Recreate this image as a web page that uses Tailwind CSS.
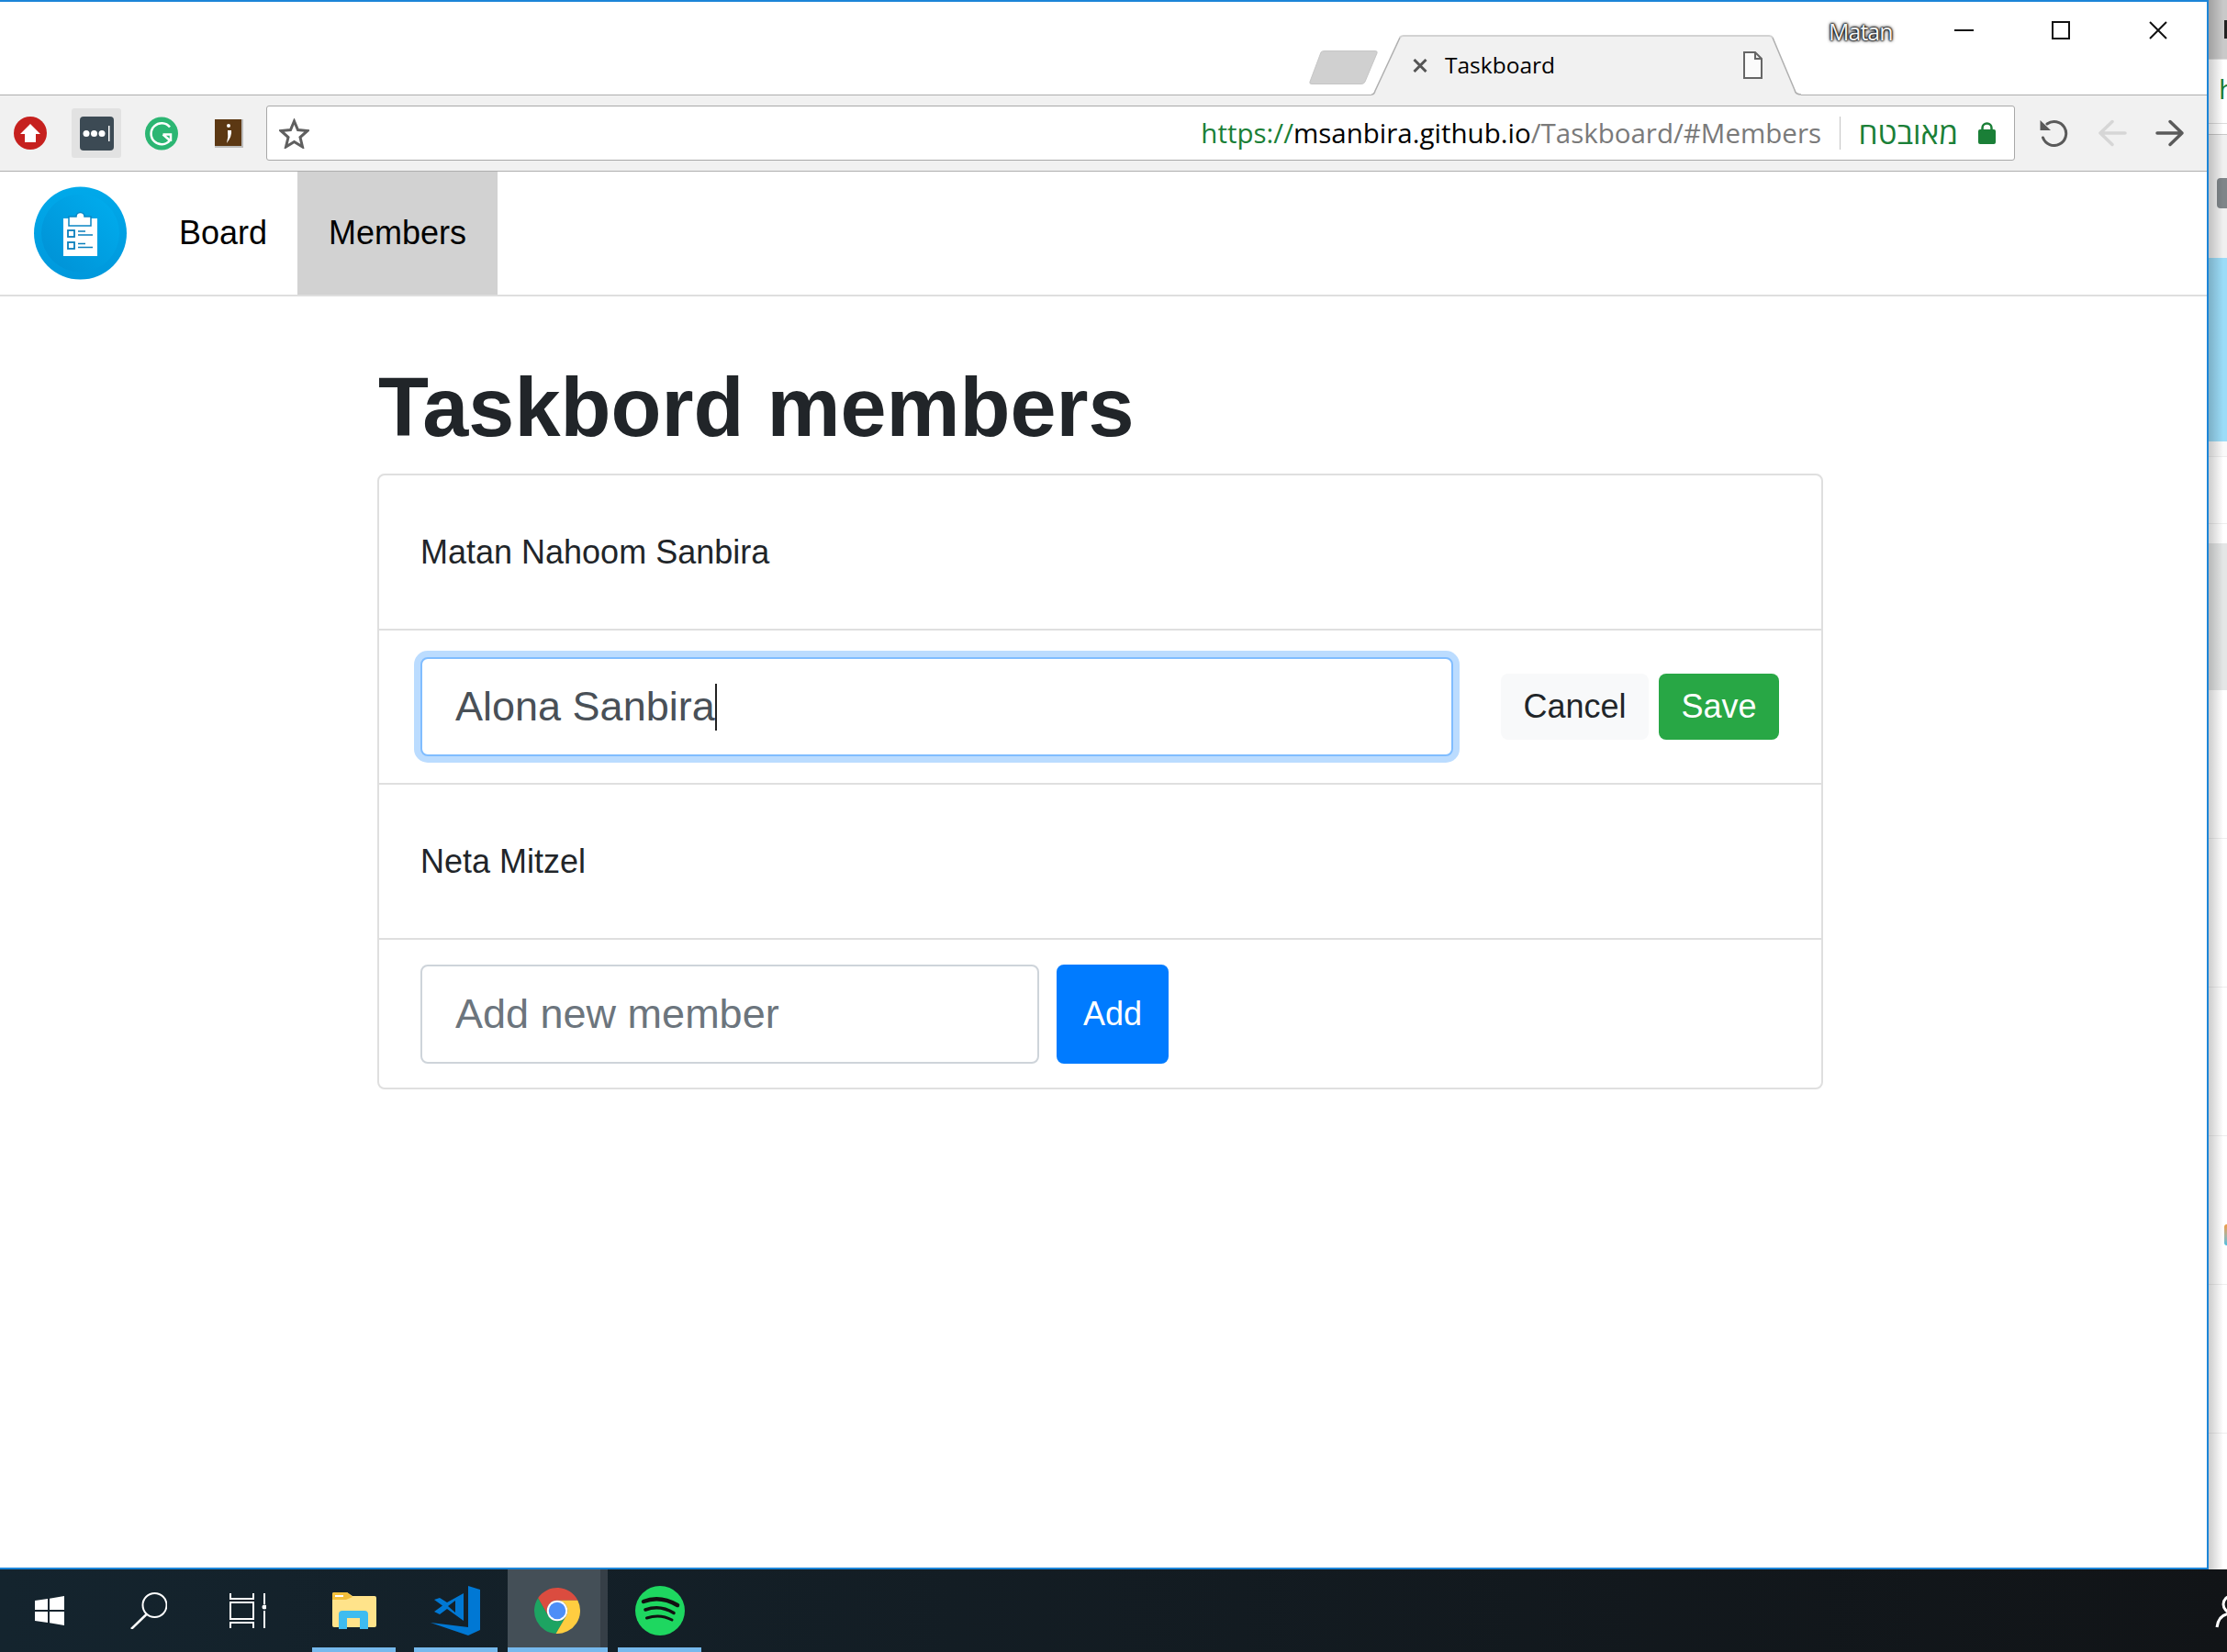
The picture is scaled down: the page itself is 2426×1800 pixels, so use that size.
<!DOCTYPE html>
<html lang="en">
<head>
<meta charset="utf-8">
<title>Taskboard</title>
<script src="https://cdn.jsdelivr.net/npm/@tailwindcss/browser@4"></script>
</head>
<body class="bg-white font-['Liberation_Sans',sans-serif] text-[#212529]">
<div class="flex h-[1800px] w-[2426px] flex-col overflow-hidden">
  <div class="flex h-[1710px]">
    <!-- browser window -->
    <div class="flex w-[2406px] flex-col border-y-2 border-r-2 border-[#1c85d8] bg-white">
      <!-- title bar -->
      <div class="flex h-[102px] items-end border-b border-[#aeaeae]">
        <svg class="mb-[11px] ml-[1426px] -mr-[7px] h-[37px] w-[75px]" viewBox="0 0 75 37"><path d="M13 2 Q14 0.500 17 0.500 H72 Q75 0.500 74 3 L61 34 Q60 36.500 57 36.500 H3 Q0 36.500 1 34 Z" fill="#d0d0d0" stroke="#c6c6c6"/></svg>
        <div class="relative -mb-px flex h-[66px] w-[468px] items-center">
          <svg class="absolute inset-0 h-full w-full" viewBox="0 0 468 66"><path d="M0 65 Q3 65 4 61 L30 3 Q31 1 34 1 H434 Q437 1 438 3 L461 60 Q462 65 468 65 V66 H0 Z" fill="#f1f1f1"/><path d="M0 65 Q3 65 4 61 L31 3" fill="none" stroke="#b0b0b0" stroke-width="1.500"/><path d="M31 3 Q32 1 35 1 H433 Q436 1 437 3" fill="none" stroke="#d2d2d2" stroke-width="2"/><path d="M437 3 L461 60 Q462 65 468 65" fill="none" stroke="#b0b0b0" stroke-width="1.500"/></svg>
          <svg class="relative ml-[45px] h-[15px] w-[16px]" viewBox="0 0 16 15"><path d="M1.500 1 L14.500 14 M14.500 1 L1.500 14" stroke="#555" stroke-width="3" fill="none"/></svg>
          <span class="relative ml-[19px] w-[118px] font-['Open_Sans',sans-serif] text-[24.500px] whitespace-nowrap text-black">Taskboard</span>
          <svg class="relative ml-[207px] h-[30px] w-[21px]" viewBox="0 0 21 30"><path d="M1 1 H13 L20 8 V29 H1 Z M13 1 V8 H20" fill="#fbfbfb" stroke="#666" stroke-width="2"/></svg>
        </div>
        <span class="mb-[56px] ml-[30px] w-[72px] font-['Open_Sans',sans-serif] text-[25px] leading-[26px] tracking-[-1px] text-[#f4f4f4] [text-shadow:0_0_2px_#000,0_0_2px_#000,0_0_3px_#000,0_0_4px_#222]">Matan</span>
        <svg class="mb-[60px] ml-[65px] h-[20px] w-[21px]" viewBox="0 0 21 20"><path d="M0 10 H21" stroke="#111" stroke-width="2"/></svg>
        <svg class="mb-[60px] ml-[85px] h-[20px] w-[20px]" viewBox="0 0 20 20"><rect x="1" y="1" width="18" height="18" fill="none" stroke="#111" stroke-width="2"/></svg>
        <svg class="mb-[60px] ml-[86px] h-[20px] w-[20px]" viewBox="0 0 20 20"><path d="M1 1 L19 19 M19 1 L1 19" stroke="#111" stroke-width="2"/></svg>
      </div>
      <!-- toolbar -->
      <div class="flex h-[83px] items-center border-b border-[#aeaeae] bg-[#f1f1f1]">
        <svg class="ml-[15px] h-[36px] w-[36px]" viewBox="0 0 36 36"><circle cx="18" cy="18" r="18" fill="#c6201e"/><path d="M18 8 L29 19 H24 V28 H12 V19 H7 Z" fill="#fff"/></svg>
        <div class="ml-[27px] flex h-[54px] w-[54px] items-center justify-center rounded-[3px] bg-[#e2e2e2]">
          <svg class="h-[37px] w-[37px]" viewBox="0 0 37 37"><rect width="37" height="37" rx="4" fill="#3c4a54"/><circle cx="7" cy="18.500" r="3.500" fill="#fff"/><circle cx="15.500" cy="18.500" r="3.500" fill="#fff"/><circle cx="24" cy="18.500" r="3.500" fill="#fff"/><rect x="31" y="10" width="1.500" height="17" fill="#fff"/></svg>
        </div>
        <svg class="ml-[26px] h-[37px] w-[36px]" viewBox="0 0 36 37"><circle cx="18" cy="18.500" r="18" fill="#2cb673"/><path d="M27 11.500 A11.500 11.500 0 1 0 27 26 L19.500 19.500 M19.500 19.500 H28 V27" fill="none" stroke="#fff" stroke-width="2.500"/></svg>
        <svg class="ml-[40px] h-[31px] w-[31px]" viewBox="0 0 31 31"><rect width="31" height="31" fill="#bdbdbd"/><rect width="29" height="29" fill="#5c3813"/><circle cx="15" cy="7" r="2" fill="#fff"/><path d="M14 12 H18 Q19 18 13 26 Q15 19 14 12 Z" fill="#fff"/></svg>
        <!-- address bar -->
        <div class="ml-[25px] flex h-[60px] w-[1905px] items-center rounded-[3px] border border-[#a8a8a8] bg-white pr-[20px]">
          <svg class="ml-[13px] h-[33px] w-[33px]" viewBox="0 0 33 33"><path d="M16.500 3 L20.500 12.500 L31 13.500 L23 20.500 L25.500 31 L16.500 25.500 L7.500 31 L10 20.500 L2 13.500 L12.500 12.500 Z" fill="none" stroke="#5f5f5f" stroke-width="3" stroke-linejoin="miter"/></svg>
          <div class="ml-auto font-['Open_Sans',sans-serif] text-[29.500px] leading-none whitespace-nowrap"><span class="text-[#1a7f37]">https://</span><span class="text-black">msanbira.github.io</span><span class="text-[#7a7a7a]">/Taskboard/#Members</span></div>
          <div class="mx-[20px] h-[36px] w-px bg-[#c4c4c4]"></div>
          <span dir="rtl" lang="he" class="w-[108px] font-['Open_Sans','Liberation_Sans',sans-serif] text-[33.500px] leading-none whitespace-nowrap text-[#1a7f37]">מאובטח</span>
          <svg class="ml-[22px] h-[24px] w-[19px]" viewBox="0 0 19 24"><path d="M4.500 10 V6.500 A5 5 0 0 1 14.500 6.500 V10" fill="none" stroke="#1a7f37" stroke-width="2.500"/><rect y="8" width="19" height="16" rx="2" fill="#1a7f37"/></svg>
        </div>
        <svg class="ml-[27px] h-[30px] w-[32px]" viewBox="0 0 32 30"><path d="M8 5 A13 13 0 1 1 3.500 20" fill="none" stroke="#5a5a5a" stroke-width="3" stroke-linecap="round"/><path d="M0.500 1 V12 H12 Z" fill="#5a5a5a"/></svg>
        <svg class="ml-[31px] h-[30px] w-[32px]" viewBox="0 0 32 30"><path d="M30 15 H3 M16 2.500 L3 15 L16 27.500" fill="none" stroke="#d6d6d6" stroke-width="3.500" stroke-linecap="round" stroke-linejoin="round"/></svg>
        <svg class="ml-[31px] h-[30px] w-[32px]" viewBox="0 0 32 30"><path d="M2 15 H29 M16 2.500 L29 15 L16 27.500" fill="none" stroke="#5a5a5a" stroke-width="3.500" stroke-linecap="round" stroke-linejoin="round"/></svg>
      </div>
      <!-- app navbar -->
      <nav class="flex h-[136px] items-stretch border-b-2 border-[#dedede]">
        <svg class="my-auto ml-[37px] h-[102px] w-[101px]" viewBox="0 0 101 102">
          <defs>
            <linearGradient id="ring" x1="0" y1="0" x2="0" y2="1"><stop offset="0" stop-color="#00a9ea"/><stop offset="1" stop-color="#0098dc"/></linearGradient>
            <linearGradient id="disc" x1="0" y1="1" x2="1" y2="0"><stop offset="0" stop-color="#0090d4"/><stop offset="1" stop-color="#00aeef"/></linearGradient>
          </defs>
          <circle cx="50.500" cy="51" r="50.500" fill="url(#ring)"/>
          <circle cx="50.500" cy="51" r="42.500" fill="url(#disc)"/>
          <rect x="32" y="35" width="37" height="41" fill="#fff"/>
          <path d="M38 43 V33 H46 A4.500 4.500 0 0 1 55 33 H62 V43 Z" fill="#fff" stroke="#0a86c4" stroke-width="1.500"/>
          <rect x="37" y="48" width="7" height="7" fill="#fff" stroke="#0a7fbd" stroke-width="1.800"/>
          <rect x="37" y="61" width="7" height="7" fill="#fff" stroke="#0a7fbd" stroke-width="1.800"/>
          <path d="M48 49 H56 M48 53 H64 M48 62.500 H56 M48 66.500 H64" stroke="#0a7fbd" stroke-width="1.600"/>
        </svg>
        <a class="ml-[24px] flex w-[162px] items-center pl-[33px] text-[36px] text-black">Board</a>
        <a class="flex w-[218px] items-center justify-center bg-[#d2d2d2] text-[36px] text-black">Members</a>
      </nav>
      <!-- page -->
      <main class="flex-1 pl-[411px]">
        <h1 class="pt-[67px] pb-[18px] pl-px text-[90px] leading-[108px] font-bold">Taskbord members</h1>
        <div class="w-[1575px] rounded-lg border-2 border-[#dfdfdf] bg-white text-[36px]">
          <div class="flex h-[169px] items-center border-b-2 border-[#dfdfdf] pl-[45px]">Matan Nahoom Sanbira</div>
          <div class="flex h-[168px] items-center border-b-2 border-[#dfdfdf] pl-[45px]">
            <div class="flex h-[108px] w-[1125px] items-center rounded-lg border-2 border-[#80bdff] bg-white pl-[36px] text-[45px] text-[#495057] shadow-[0_0_0_7px_#bbdcff]">Alona Sanbira<span class="h-[51px] w-[2px] bg-[#222]"></span></div>
            <button class="ml-[52px] h-[72px] w-[161px] rounded-lg bg-[#f8f9fa] text-[#212529]">Cancel</button>
            <button class="ml-[11px] h-[72px] w-[131px] rounded-lg bg-[#28a745] text-white">Save</button>
          </div>
          <div class="flex h-[169px] items-center border-b-2 border-[#dfdfdf] pl-[45px]">Neta Mitzel</div>
          <div class="flex h-[161px] items-center pl-[45px]">
            <input class="h-[108px] w-[674px] rounded-lg border-2 border-[#ced4da] bg-white pl-[36px] text-[45px] placeholder:text-[#6c757d]" placeholder="Add new member">
            <button class="ml-[19px] h-[108px] w-[122px] rounded-lg bg-[#007bff] text-white">Add</button>
          </div>
        </div>
      </main>
    </div>
    <!-- sliver of the window behind -->
    <aside class="relative w-[20px] overflow-hidden bg-white">
      <div class="flex h-[64px] items-center justify-end overflow-hidden bg-[#c9c9c9]"><div class="h-[20px] w-[3px] bg-[#222]"></div></div>
      <div class="h-[71px] overflow-hidden border-y border-[#dcdcdc] pl-[11px] font-['Open_Sans',sans-serif] text-[30px] leading-[64px] text-[#1a7f37]">h</div>
      <div class="h-[12px] border-b border-[#c8c8c8]"></div>
      <div class="flex h-[134px] justify-end bg-[#f0f0f0] pt-[47px]"><div class="h-[33px] w-[11px] rounded-l-[4px] bg-[#7f8589]"></div></div>
      <div class="h-[200px] bg-[#9bdcf8]"></div>
      <div class="h-[17px] border-b border-[#eeeeee] bg-[#fafafa]"></div>
      <div class="h-[73px] border-b border-[#eeeeee]"></div>
      <div class="h-[21px]"></div>
      <div class="h-[160px] bg-[#e4e6e6]"></div>
      <div class="h-[162px] border-b border-[#eeeeee]"></div>
      <div class="h-[162px] border-b border-[#eeeeee]"></div>
      <div class="h-[162px] border-b border-[#eeeeee]"></div>
      <div class="relative h-[162px] border-b border-[#eeeeee]"><div class="absolute top-[96px] right-0 h-[23px] w-[3px] rounded-l-sm bg-gradient-to-b from-[#ee9a3a] to-[#43bfe0]"></div></div>
      <div class="h-[162px] border-b border-[#eeeeee]"></div>
      <div class="absolute inset-y-0 left-0 w-[16px] bg-gradient-to-r from-black/20 to-transparent"></div>
    </aside>
  </div>
  <!-- windows taskbar -->
  <footer class="flex h-[90px] items-stretch bg-gradient-to-r from-[#14242e] to-[#111417]">
    <svg class="my-auto ml-[38px] h-[32px] w-[32px]" viewBox="0 0 32 32"><path d="M0 5 L14 3 V15 H0 Z M16 2.700 L32 0 V15 H16 Z M0 17 H14 V29 L0 27 Z M16 17 H32 V32 L16 29.300 Z" fill="#fff"/></svg>
    <svg class="my-auto ml-[72px] h-[40px] w-[40px]" viewBox="0 0 40 40"><ellipse cx="26.500" cy="14" rx="13" ry="13" fill="none" stroke="#fff" stroke-width="2"/><path d="M17.500 24 L1 40" stroke="#fff" stroke-width="2.500"/></svg>
    <svg class="my-auto ml-[68px] h-[38px] w-[40px]" viewBox="0 0 40 38"><path d="M1 0 V6 H26 V0 M1 10 H26 V28 H1 Z M1 38 V32 H26 V38 M38 0 V12 M38 19 V38" fill="none" stroke="#fff" stroke-width="2"/><circle cx="38" cy="15" r="2.500" fill="#fff"/></svg>
    <div class="relative ml-[50px] flex w-[91px] items-center justify-center">
      <svg class="h-[40px] w-[48px]" viewBox="0 0 48 40"><path d="M0 2 Q0 0 2 0 H16 L22 4 H46 Q48 4 48 6 V36 Q48 38 46 38 H2 Q0 38 0 36 Z" fill="#ffe38a"/><path d="M0 2 Q0 0 2 0 H16 L22 5 L15 8 H0 Z" fill="#f3bf3b"/><rect x="3" y="3" width="9" height="2" fill="#fff"/><path d="M7 40 V24 Q7 20 11 20 H35 Q39 20 39 24 V40 H30 V28 H16 V40 Z" fill="#3ebcf0"/></svg>
      <div class="absolute inset-x-0 bottom-0 h-[5px] bg-[#76b9ed]"></div>
    </div>
    <div class="relative ml-[20px] flex w-[91px] items-center justify-center">
      <svg class="h-[55px] w-[55px]" viewBox="0 0 55 55"><path d="M41 0 L54 4 V48 L41 54 L0 40 L41 45 Z" fill="#0078d4"/><path fill-rule="evenodd" d="M36 8 V38 L18 25 L10 31 L4 28 L13 21.500 L4 15 L10 13 L18 18 Z M27 16 L19 22 L27 29 Z" fill="#0078d4"/></svg>
      <div class="absolute inset-x-0 bottom-0 h-[5px] bg-[#76b9ed]"></div>
    </div>
    <div class="relative ml-[11px] flex w-[109px] bg-[#444f57]">
      <div class="flex w-[101px] items-center justify-center pl-[7px]">
        <svg class="h-[50px] w-[50px]" viewBox="4 4 40 40"><path d="M7.280 13.030 A20 20 0 0 1 41.860 15 L24 15 A9 9 0 0 0 16.200 28.500 Z" fill="#db4c3f"/><path d="M7.280 13.030 A20 20 0 0 0 22.860 43.970 L31.800 28.500 A9 9 0 0 1 16.200 28.500 Z" fill="#1da462"/><path d="M41.860 15 A20 20 0 0 1 22.860 43.970 L31.800 28.500 A9 9 0 0 0 24 15 Z" fill="#ffcd40"/><circle cx="24" cy="24" r="9" fill="#fff"/><circle cx="24" cy="24" r="7.400" fill="#4d8ef7"/></svg>
      </div>
      <div class="w-[8px] bg-[#363f47]"></div>
      <div class="absolute inset-x-0 bottom-0 h-[5px] bg-[#76b9ed]"></div>
    </div>
    <div class="relative ml-[11px] flex w-[91px] items-center justify-center">
      <svg class="h-[54px] w-[54px]" viewBox="0 0 54 54"><circle cx="27" cy="27" r="27" fill="#1ed760"/><path d="M9 17 Q27 10 46 21" fill="none" stroke="#111" stroke-width="4.500" stroke-linecap="round"/><path d="M11 26 Q27 20 42 29.500" fill="none" stroke="#111" stroke-width="3.500" stroke-linecap="round"/><path d="M12.500 35 Q27 30 40 37" fill="none" stroke="#111" stroke-width="3" stroke-linecap="round"/></svg>
      <div class="absolute inset-x-0 bottom-0 h-[5px] bg-[#76b9ed]"></div>
    </div>
    <div class="my-auto ml-auto h-[38px] w-[13px] overflow-hidden">
      <svg class="h-[38px] w-[38px]" viewBox="0 0 38 38"><circle cx="18" cy="12" r="9" fill="none" stroke="#fff" stroke-width="3"/><path d="M2 37 Q4 22 18 22 Q32 22 34 37" fill="none" stroke="#fff" stroke-width="3"/></svg>
    </div>
  </footer>
</div>
</body>
</html>
